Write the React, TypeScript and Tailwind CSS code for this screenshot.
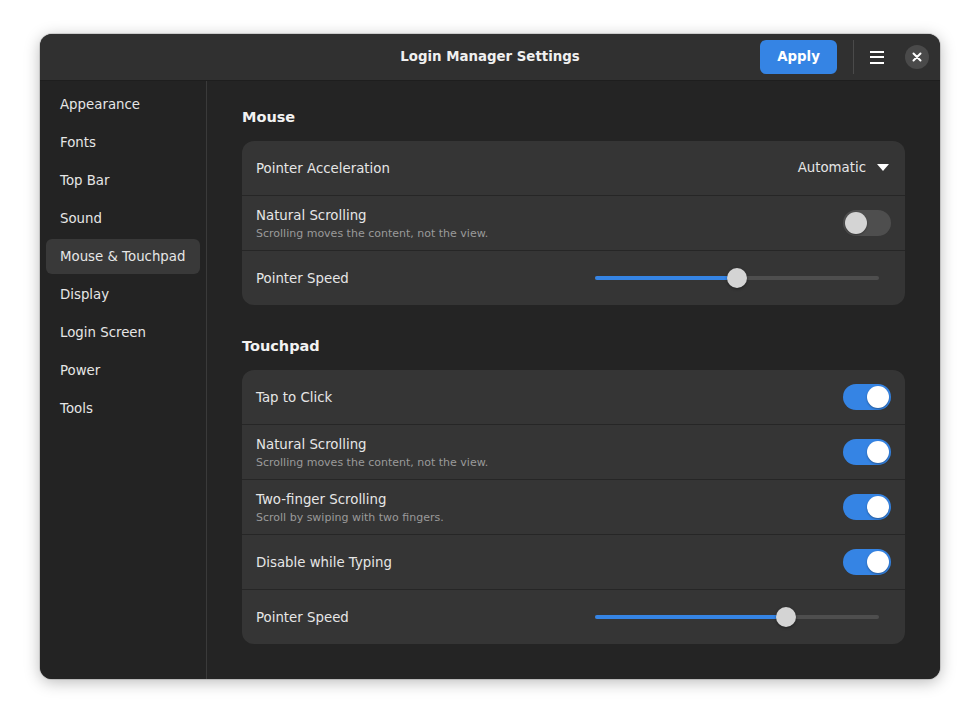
import React from "react";

const font = { fontFamily: '"DejaVu Sans", "Noto Sans", sans-serif' };

function Toggle({ on }: { on: boolean }) {
  return (
    <div
      className={`w-[48px] h-[26px] rounded-full p-[2px] flex items-center ${
        on ? "bg-[#3584e4] justify-end" : "bg-[#4e4e4e] justify-start"
      }`}
    >
      <div
        className={`w-[22px] h-[22px] rounded-full shadow-[0_1px_2px_rgba(0,0,0,0.35)] ${
          on ? "bg-white" : "bg-[#d4d4d4]"
        }`}
      />
    </div>
  );
}

function Slider({ value }: { value: number }) {
  return (
    <div className="relative w-[284px] h-[20px] mr-[12px] flex items-center">
      <div className="w-full h-[4px] rounded-full bg-[#4e4e4e]">
        <div className="h-full rounded-full bg-[#3584e4]" style={{ width: `${value * 100}%` }} />
      </div>
      <div
        className="absolute top-0 w-[20px] h-[20px] -ml-[10px] rounded-full bg-[#d4d4d4] shadow-[0_1px_3px_rgba(0,0,0,0.4)]"
        style={{ left: `${value * 100}%` }}
      />
    </div>
  );
}

function Row({
  title,
  subtitle,
  children,
  last,
}: {
  title: string;
  subtitle?: string;
  children: React.ReactNode;
  last?: boolean;
}) {
  return (
    <div
      className={`flex items-center justify-between pl-[14px] pr-[14px] ${
        last ? "h-[54px]" : "h-[55px] border-b border-[#262626]"
      }`}
    >
      <div className="flex flex-col">
        <div className="text-[13.33px] text-[#e6e6e6] leading-[17px]">{title}</div>
        {subtitle && (
          <div className="text-[11px] text-[#9a9a9a] leading-[14px] mt-[3px] mb-[-1px]">{subtitle}</div>
        )}
      </div>
      {children}
    </div>
  );
}

const nav = [
  "Appearance",
  "Fonts",
  "Top Bar",
  "Sound",
  "Mouse & Touchpad",
  "Display",
  "Login Screen",
  "Power",
  "Tools",
];

export default function App() {
  return (
    <div className="w-[980px] h-[725px] bg-white pt-[34px] pl-[40px]" style={font}>
      <div className="w-[900px] h-[645px] rounded-[12px] overflow-hidden flex flex-col bg-[#242424] shadow-[0_3px_16px_rgba(0,0,0,0.28),0_0_0_1px_rgba(0,0,0,0.12)]">
        {/* Header */}
        <div className="h-[47px] shrink-0 bg-[#303030] border-b border-[#1e1e1e] relative flex items-center justify-end pr-[11px]">
          <div className="absolute inset-0 flex items-center justify-center pointer-events-none">
            <span className="text-[13.33px] font-bold text-[#f0f0f0]">Login Manager Settings</span>
          </div>
          <button className="relative w-[77px] h-[34px] rounded-[6px] bg-[#3584e4] text-white text-[13.33px] font-bold flex items-center justify-center">
            Apply
          </button>
          <div className="relative w-[1px] h-[34px] bg-[#4a4a4a] ml-[16px]" />
          <div className="relative w-[34px] h-[34px] ml-[6px] flex items-center justify-center">
            <div className="flex flex-col gap-[3.5px]">
              <div className="w-[14px] h-[2px] bg-white" />
              <div className="w-[14px] h-[2px] bg-white" />
              <div className="w-[14px] h-[2px] bg-white" />
            </div>
          </div>
          <div className="relative w-[24px] h-[24px] ml-[11px] rounded-full bg-[#4a4a4a] flex items-center justify-center">
            <svg width="10" height="10" viewBox="0 0 10 10">
              <path d="M1.5 1.5 L8.5 8.5 M8.5 1.5 L1.5 8.5" stroke="white" strokeWidth="2" strokeLinecap="round" />
            </svg>
          </div>
        </div>

        <div className="flex flex-1 min-h-0">
          {/* Sidebar */}
          <div className="w-[167px] shrink-0 bg-[#232323] border-r border-[#3a3a3a] pt-[6px] px-[6px] flex flex-col gap-[3px]">
            {nav.map((n) => (
              <div
                key={n}
                className={`h-[35px] rounded-[6px] flex items-center pl-[14px] text-[13.33px] text-[#e6e6e6] ${
                  n === "Mouse & Touchpad" ? "bg-[#393939]" : ""
                }`}
              >
                {n}
              </div>
            ))}
          </div>

          {/* Content */}
          <div className="flex-1 bg-[#242424] px-[35px] pt-[27px]">
            <div className="text-[14.5px] font-bold text-[#f2f2f2] leading-[18px]">Mouse</div>
            <div className="mt-[15px] rounded-[12px] bg-[#353535] overflow-hidden">
              <Row title="Pointer Acceleration">
                <div className="flex items-center text-[13.33px] text-[#e6e6e6]">
                  <span>Automatic</span>
                  <svg className="ml-[11px] mr-[2px]" width="12" height="7" viewBox="0 0 12 7">
                    <path d="M0 0 H12 L6 7 Z" fill="white" />
                  </svg>
                </div>
              </Row>
              <Row title="Natural Scrolling" subtitle="Scrolling moves the content, not the view.">
                <Toggle on={false} />
              </Row>
              <Row title="Pointer Speed" last>
                <Slider value={0.5} />
              </Row>
            </div>

            <div className="mt-[32px] text-[14.5px] font-bold text-[#f2f2f2] leading-[18px]">Touchpad</div>
            <div className="mt-[15px] rounded-[12px] bg-[#353535] overflow-hidden">
              <Row title="Tap to Click">
                <Toggle on />
              </Row>
              <Row title="Natural Scrolling" subtitle="Scrolling moves the content, not the view.">
                <Toggle on />
              </Row>
              <Row title="Two-finger Scrolling" subtitle="Scroll by swiping with two fingers.">
                <Toggle on />
              </Row>
              <Row title="Disable while Typing">
                <Toggle on />
              </Row>
              <Row title="Pointer Speed" last>
                <Slider value={0.672} />
              </Row>
            </div>
          </div>
        </div>
      </div>
    </div>
  );
}
